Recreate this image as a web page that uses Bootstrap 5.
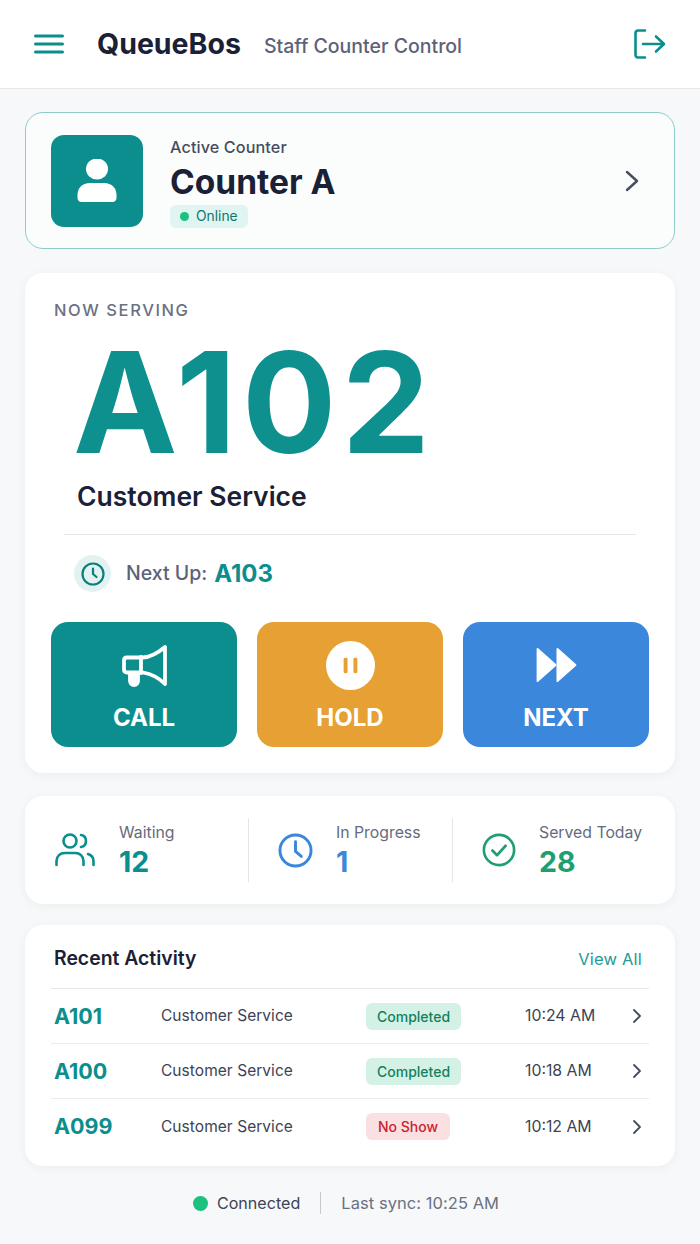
<!DOCTYPE html>
<html lang="en">
<head>
  <meta charset="UTF-8">
  <title>QueueBos | Staff Counter Control</title>
  <link href="https://cdn.jsdelivr.net/npm/bootstrap@5.3.0/dist/css/bootstrap.min.css" rel="stylesheet">
  <style>
    body {
      background: #f6f8f9;
      font-family: "Inter", "Liberation Sans", sans-serif;
      color: #1a2035;
      height: 1244px;
      overflow: hidden;
    }

    .top-bar {
      height: 89px;
      background: #fff;
      border-bottom: 1px solid #e6e8ea;
      padding: 0 34px;
    }
    .brand-name { font-size: 28.500px; font-weight: 700; margin-left: 33px; line-height: 1; }
    .brand-sub { font-size: 19.500px; font-weight: 500; color: #5c6278; margin-left: 23px; line-height: 1; padding-top: 5px; }

    .page-wrap { padding: 23px 25px 0; }

    .counter-box {
      height: 137px;
      background: #fbfdfd;
      border: 1px solid #8ccbc8;
      border-radius: 18px;
      padding: 0 35px 0 25px;
    }
    .counter-avatar {
      width: 92px;
      height: 92px;
      background: #0b8e8d;
      border-radius: 13px;
      margin-right: 27px;
    }
    .counter-text { padding-top: 5px; }
    .counter-label { font-size: 16.200px; font-weight: 500; color: #474d60; line-height: 19px; letter-spacing: .1px; }
    .counter-name { font-size: 33.500px; font-weight: 700; line-height: 40px; margin-top: 5px; }
    .online-pill {
      display: inline-flex;
      align-items: center;
      height: 23px;
      margin-top: 3px;
      padding: 0 10px;
      gap: 7px;
      background: #e0f5f1;
      border-radius: 6px;
      font-size: 13.800px;
      font-weight: 400;
      color: #0f766e;
    }
    .online-pill i { width: 9px; height: 9px; border-radius: 50%; background: #1cc07f; }

    .white-panel {
      background: #fff;
      border-radius: 18px;
      box-shadow: 0 2px 10px rgba(30, 50, 70, .05);
    }

    .serving-panel { height: 500px; margin-top: 24px; padding: 27px 26px 0; }
    .serving-title { font-size: 16.500px; font-weight: 500; letter-spacing: 1.6px; color: #6a7182; line-height: 20px; padding-left: 3px; }
    .ticket-big {
      font-size: 140px;
      font-weight: 700;
      line-height: 130px;
      letter-spacing: 5.500px;
      color: #0e908e;
      margin-top: 17px;
      padding-left: 22px;
    }
    .service-name { font-size: 26.500px; font-weight: 600; line-height: 32px; margin-top: 13px; padding-left: 26px; }
    .serving-rule { height: 1px; background: #e4e7e9; margin: 22px 13px 0; }
    .next-row { margin: 20px 0 0 23px; height: 37px; }
    .next-dot {
      width: 37px;
      height: 37px;
      border-radius: 50%;
      background: #e3f2f1;
      margin-right: 15px;
    }
    .next-label { font-size: 19.500px; font-weight: 500; color: #5c6278; margin-right: 8px; }
    .next-value { font-size: 24px; font-weight: 700; color: #0b8e8d; margin-left: -1px; }
    .action-row { margin-top: 30px; gap: 20px; }
    .action-btn {
      flex: 1 1 0;
      height: 125px;
      border: 0;
      border-radius: 17px;
      color: #fff;
      font-size: 24px;
      font-weight: 700;
      line-height: 29px;
      padding: 18px 0 0;
    }
    .action-btn:hover, .action-btn:active { color: #fff; }
    .btn-glyph { height: 50px; margin-bottom: 13px; }
    .btn-call, .btn-call:hover { background: #0b8e8d !important; }
    .btn-hold, .btn-hold:hover { background: #e6a034 !important; }
    .btn-next, .btn-next:hover { background: #3a87dc !important; }

    .stats-panel { height: 108px; margin-top: 23px; padding: 0 26px; }
    .stat-cell { height: 64px; }
    .stat-one { width: 197px; padding-left: 4px; }
    .stat-two { width: 204px; padding-left: 29px; border-left: 1px solid #e4e7e9; }
    .stat-three { flex: 1; padding-left: 29px; border-left: 1px solid #e4e7e9; }
    .stat-icon { flex: none; }
    .stat-one .stat-icon { margin-right: 24px; }
    .stat-two .stat-icon { margin-right: 23px; }
    .stat-three .stat-icon { margin-right: 23px; }
    .stat-label { font-size: 15.800px; color: #656b7c; line-height: 19px; margin-top: 1px; }
    .stat-num { font-size: 28.500px; font-weight: 700; line-height: 34px; margin-top: 3px; }

    .recent-panel { height: 241px; margin-top: 21px; padding: 0 26px; }
    .recent-head { height: 64px; padding: 5px 7px 0 3px; border-bottom: 1px solid #e6e8ea; }
    .recent-title { font-size: 19.400px; font-weight: 600; }
    .view-all { font-size: 16.500px; font-weight: 400; color: #1f9a96; text-decoration: none; letter-spacing: .2px; }
    .recent-row { height: 55px; padding-left: 3px; border-bottom: 1px solid #e9ebed; }
    .recent-row:last-child { border-bottom: 0; }
    .rec-id { width: 107px; font-size: 21.500px; font-weight: 700; color: #0b8e8d; }
    .rec-service { width: 205px; font-size: 15.500px; color: #3d4355; letter-spacing: .05px; }
    .rec-status { width: 159px; }
    .rec-time { width: 107px; font-size: 15.800px; color: #3d4355; }
    .status-tag {
      display: inline-block;
      height: 27px;
      line-height: 27px;
      padding: 0 11px;
      border-radius: 6px;
      font-size: 14px;
      font-weight: 500;
    }
    .tag-done { background: #d3f1e4; color: #14805c; }
    .tag-miss { background: #fbe0e2; color: #cc2131; padding: 0 12px; }

    .sync-bar { margin-top: 25px; height: 24px; font-size: 16.500px; padding-right: 8px; }
    .sync-dot { width: 15px; height: 15px; border-radius: 50%; background: #1cc07f; margin-right: 9px; }
    .sync-on { color: #3d4355; font-weight: 400; font-size: 16.100px; }
    .sync-sep { width: 1px; height: 22px; background: #c5c9ce; margin: 0 20px; }
    .sync-time { color: #6a7182; letter-spacing: .05px; }
  </style>
</head>
<body>

<header class="top-bar d-flex align-items-center justify-content-between">
  <div class="d-flex align-items-center">
    <svg width="30" height="20" viewBox="0 0 30 20" fill="none" stroke="#0b8e8d" stroke-width="3" stroke-linecap="round">
      <path d="M1.500 2h27M1.500 10h27M1.500 18h27"/>
    </svg>
    <span class="brand-name">QueueBos</span>
    <span class="brand-sub">Staff Counter Control</span>
  </div>
  <svg width="32" height="30" viewBox="0 0 32 30" fill="none" stroke="#0b8e8d" stroke-width="2.600" stroke-linecap="round" stroke-linejoin="round">
    <path d="M11 1.500H4a2.500 2.500 0 0 0-2.500 2.500v22a2.500 2.500 0 0 0 2.500 2.500h7"/>
    <path d="M9 15h21M22 7.500l8 7.500-8 7.500"/>
  </svg>
</header>

<main class="page-wrap">
  <section class="counter-box d-flex align-items-center">
    <div class="counter-avatar d-flex align-items-center justify-content-center flex-shrink-0">
      <svg width="40" height="43" viewBox="0 0 40 43" fill="#fff">
        <ellipse cx="20" cy="10" rx="11" ry="10.500"/>
        <path d="M13 24h14c8 0 12.500 5 12.500 12v3c0 2-1.500 4-4 4h-31c-2.500 0-4-2-4-4v-3c0-7 4.500-12 12.500-12z"/>
      </svg>
    </div>
    <div class="counter-text flex-grow-1">
      <div class="counter-label">Active Counter</div>
      <div class="counter-name">Counter A</div>
      <span class="online-pill"><i></i>Online</span>
    </div>
    <svg width="14" height="22" viewBox="0 0 14 22" fill="none" stroke="#474d60" stroke-width="2.400" stroke-linecap="round" stroke-linejoin="round">
      <path d="M2 2l10 9-10 9"/>
    </svg>
  </section>

  <section class="white-panel serving-panel">
    <div class="serving-title">NOW SERVING</div>
    <div class="ticket-big">A102</div>
    <div class="service-name">Customer Service</div>
    <div class="serving-rule"></div>
    <div class="next-row d-flex align-items-center">
      <span class="next-dot d-flex align-items-center justify-content-center">
        <svg width="24" height="24" viewBox="0 0 24 24" fill="none" stroke="#0b7f7c" stroke-width="2.200" stroke-linecap="round" stroke-linejoin="round">
          <circle cx="12" cy="12" r="10.500"/><path d="M12 6.500V12l3.500 3"/>
        </svg>
      </span>
      <span class="next-label">Next Up:</span>
      <span class="next-value">A103</span>
    </div>
    <div class="action-row d-flex">
      <button type="button" class="btn action-btn btn-call d-flex flex-column align-items-center">
        <span class="btn-glyph d-flex align-items-center">
          <svg width="46" height="43" viewBox="0 0 46 43" fill="none" stroke="#fff" stroke-width="3.800" stroke-linejoin="round" stroke-linecap="round">
            <path d="M44 3v37c-6-6-13-10-22-11.500H6c-2 0-3-1-3-3v-9c0-2 1-3 3-3h16C31 13 38 8 44 3z"/>
            <path d="M20 13v16"/>
            <path d="M9 29v8a4 4 0 0 0 8 0v-8z" fill="#fff"/>
          </svg>
        </span>
        CALL
      </button>
      <button type="button" class="btn action-btn btn-hold d-flex flex-column align-items-center">
        <span class="btn-glyph d-flex align-items-center">
          <svg width="49" height="49" viewBox="0 0 50 50">
            <circle cx="25" cy="25" r="25" fill="#fff"/>
            <rect x="18" y="17" width="4" height="16" rx="1.500" fill="#e6a034"/>
            <rect x="28" y="17" width="4" height="16" rx="1.500" fill="#e6a034"/>
          </svg>
        </span>
        HOLD
      </button>
      <button type="button" class="btn action-btn btn-next d-flex flex-column align-items-center">
        <span class="btn-glyph d-flex align-items-center">
          <svg width="43" height="36" viewBox="0 0 44 38" fill="#fff" stroke="#fff" stroke-width="2" stroke-linejoin="round">
            <path d="M2 2l19 17L2 36z"/>
            <path d="M23 2l19 17-19 17z"/>
          </svg>
        </span>
        NEXT
      </button>
    </div>
  </section>

  <section class="white-panel stats-panel d-flex align-items-center">
    <div class="stat-cell stat-one d-flex align-items-center">
      <svg class="stat-icon" width="40" height="34" viewBox="0 0 40 34" fill="none" stroke="#0b8e8d" stroke-width="2.600" stroke-linecap="round">
        <circle cx="15" cy="8" r="6.500"/>
        <path d="M26 2c3 .5 5 3 5 6s-2 5.500-5 6"/>
        <path d="M1.500 32v-4c0-5 4-8 8-8h11c4 0 8 3 8 8v4"/>
        <path d="M33 21c3 1 5.500 3.500 5.500 7v4"/>
      </svg>
      <div>
        <div class="stat-label">Waiting</div>
        <div class="stat-num" style="color:#0b8e8d">12</div>
      </div>
    </div>
    <div class="stat-cell stat-two d-flex align-items-center">
      <svg class="stat-icon" width="35" height="35" viewBox="0 0 36 36" fill="none" stroke="#3a87dc" stroke-width="3" stroke-linecap="round" stroke-linejoin="round">
        <circle cx="18" cy="18" r="16"/><path d="M18 9v10l6 5"/>
      </svg>
      <div>
        <div class="stat-label">In Progress</div>
        <div class="stat-num" style="color:#3a87dc">1</div>
      </div>
    </div>
    <div class="stat-cell stat-three d-flex align-items-center">
      <svg class="stat-icon" width="34" height="34" viewBox="0 0 36 36" fill="none" stroke="#1f9e6f" stroke-width="2.800" stroke-linecap="round" stroke-linejoin="round">
        <circle cx="18" cy="18" r="16"/><path d="M11 18.500l5 5 9-10"/>
      </svg>
      <div>
        <div class="stat-label">Served Today</div>
        <div class="stat-num" style="color:#1f9e6f">28</div>
      </div>
    </div>
  </section>

  <section class="white-panel recent-panel">
    <div class="recent-head d-flex align-items-center justify-content-between">
      <span class="recent-title">Recent Activity</span>
      <a href="#" class="view-all">View All</a>
    </div>
    <div id="recent-rows"></div>
  </section>

  <footer class="sync-bar d-flex align-items-center justify-content-center">
    <span class="sync-dot"></span>
    <span class="sync-on">Connected</span>
    <span class="sync-sep"></span>
    <span class="sync-time">Last sync: 10:25 AM</span>
  </footer>
</main>

<script src="https://cdn.jsdelivr.net/npm/bootstrap@5.3.0/dist/js/bootstrap.bundle.min.js"></script>
<script>
  const recent = [
    { id: 'A101', status: 'Completed', cls: 'tag-done', time: '10:24 AM' },
    { id: 'A100', status: 'Completed', cls: 'tag-done', time: '10:18 AM' },
    { id: 'A099', status: 'No Show', cls: 'tag-miss', time: '10:12 AM' }
  ];

  document.getElementById('recent-rows').innerHTML = recent.map(r => `
    <div class="recent-row d-flex align-items-center">
      <span class="rec-id">${r.id}</span>
      <span class="rec-service">Customer Service</span>
      <span class="rec-status"><span class="status-tag ${r.cls}">${r.status}</span></span>
      <span class="rec-time">${r.time}</span>
      <svg width="10" height="16" viewBox="0 0 10 16" fill="none" stroke="#474d60" stroke-width="1.800" stroke-linecap="round" stroke-linejoin="round"><path d="M2 2l6 6-6 6"/></svg>
    </div>`).join('');
</script>

</body>
</html>
